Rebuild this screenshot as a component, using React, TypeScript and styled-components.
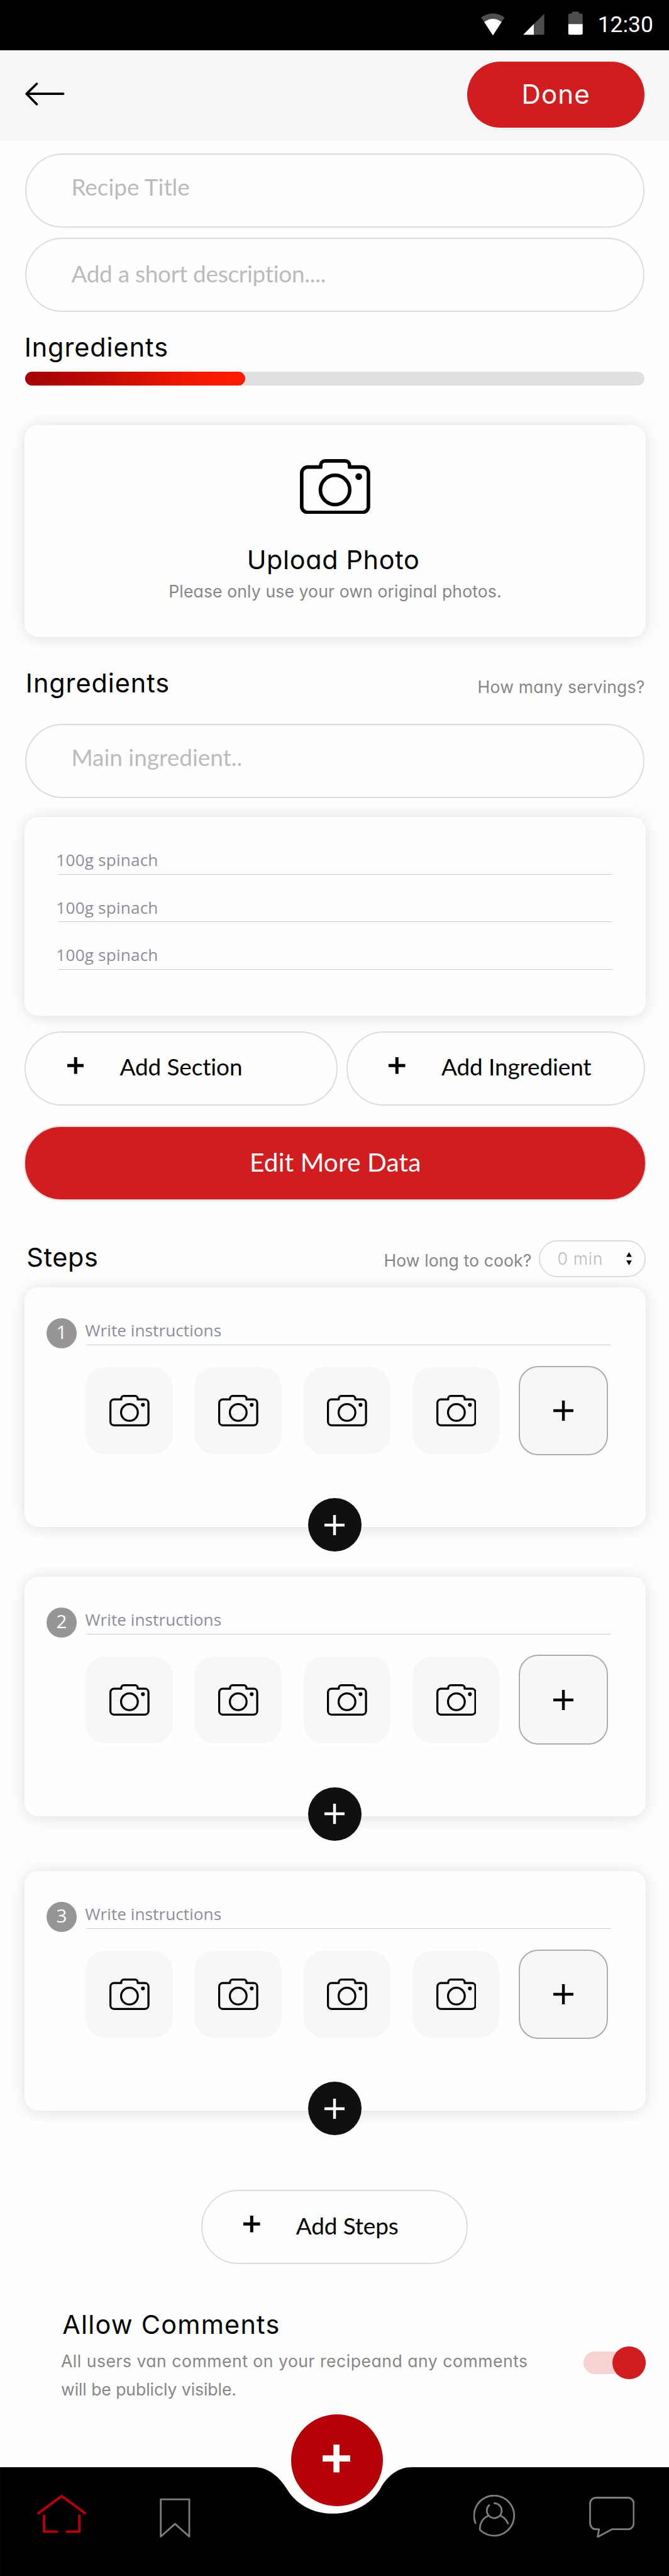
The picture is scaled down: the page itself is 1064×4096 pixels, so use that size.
import React from 'react';
import styled, { createGlobalStyle, css } from 'styled-components';

const SCALE = 0.7387;
/** Converts a design unit (1440-wide artboard) to CSS pixels. */
const u = (n: number) => `${+(n * SCALE).toFixed(3)}px`;

const color = {
  red: '#d11c20',
  deepRed: '#b60008',
  line: '#dddddd',
  hint: '#868686',
  placeholder: '#bbbbbb',
  entry: '#8b8e9a',
  rule: '#c9c9c9',
  tile: '#f7f7f7',
};

const geometric = css`
  font-family: Inter, 'Open Sans', sans-serif;
  font-feature-settings: 'cv11', 'calt' 0;
`;
const humanist = css`
  font-family: Lato, 'Open Sans', sans-serif;
  font-variant-ligatures: none;
`;

const GlobalStyle = createGlobalStyle`
  *, *::before, *::after { box-sizing: border-box; }
  body { margin: 0; background: #fefefe; }
  svg { display: block; flex: none; }
  button { margin: 0; padding: 0; border: 0; background: none; font: inherit; color: inherit; }
  h2, p { margin: 0; font-weight: 400; }
`;

const Page = styled.div`
  width: 1064px;
  height: 4096px;
  overflow: hidden;
  display: flex;
  flex-direction: column;
  background: #fefefe;
  color: #000;
`;

/* ---------- status bar and header ---------- */

const StatusBar = styled.div`
  flex: none;
  display: flex;
  justify-content: flex-end;
  height: ${u(108)};
  padding-right: ${u(34)};
  background: #000;
`;

const Clock = styled.span`
  margin-left: ${u(32.5)};
  padding-top: ${u(33.5)};
  font-family: Roboto, sans-serif;
  font-size: ${u(48)};
  line-height: ${u(40)};
  color: #fff;
`;

const Header = styled.header`
  flex: none;
  display: flex;
  justify-content: space-between;
  align-items: flex-start;
  height: ${u(194)};
  margin-top: ${u(1)};
  padding: ${u(24)} ${u(52.5)} 0 ${u(54.5)};
  background: #f8f8f8;
`;

const BackButton = styled.button`
  padding-top: ${u(44.5)};
`;

const DoneButton = styled.button`
  ${geometric}
  width: ${u(382)};
  height: ${u(142)};
  border-radius: ${u(71)};
  background: ${color.red};
  color: #fff;
  font-size: ${u(57)};
  line-height: ${u(142)};
  letter-spacing: ${u(1.4)};
  text-align: center;
`;

/* ---------- shared parts ---------- */

const Content = styled.main`
  flex: none;
  display: flex;
  flex-direction: column;
  padding: 0 ${u(51)} 0 ${u(53.3)};
`;

const Title = styled.h2<{ $spacing: number }>`
  ${geometric}
  font-size: ${u(56)};
  line-height: ${u(60)};
  letter-spacing: ${(p) => u(p.$spacing)};
  white-space: nowrap;
`;

const Hint = styled.p<{ $spacing: number }>`
  ${geometric}
  font-size: ${u(36)};
  line-height: ${u(40)};
  letter-spacing: ${(p) => u(p.$spacing)};
  color: ${color.hint};
  white-space: nowrap;
`;

const Field = styled.div<{ $top: number; $lift: number; $tracking?: number }>`
  ${humanist}
  display: flex;
  align-items: center;
  width: ${u(1333.5)};
  height: ${u(160)};
  margin: ${(p) => u(p.$top)} 0 0 ${u(1)};
  padding: 0 ${u(100)} ${(p) => u(p.$lift)} ${u(96.5)};
  border: ${u(3)} solid ${color.line};
  border-radius: ${u(80)};
  font-size: ${u(50)};
  letter-spacing: ${(p) => u(p.$tracking ?? 0)};
  color: ${color.placeholder};
`;

const Card = styled.section<{ $top: number; $height: number }>`
  position: relative;
  display: flex;
  flex-direction: column;
  width: ${u(1336.5)};
  height: ${(p) => u(p.$height)};
  margin-top: ${(p) => u(p.$top)};
  border-radius: ${u(30)};
  background: #fefefe;
  box-shadow: 0 ${u(2)} ${u(34)} rgba(0, 0, 0, 0.13);
`;

/* ---------- progress ---------- */

const ProgressTitle = styled(Title)`
  margin: ${u(45.5)} 0 0 ${u(-1)};
`;

const Track = styled.div`
  width: ${u(1333.5)};
  height: ${u(30)};
  margin: ${u(22.5)} 0 0 ${u(1)};
  border-radius: ${u(15)};
  background: #e0e0e0;
`;

const Fill = styled.div`
  width: ${u(474)};
  height: 100%;
  border-radius: inherit;
  background: linear-gradient(90deg, #a10305 0%, #bd0a04 32%, #f01802 74%, #ff1c00 100%);
`;

/* ---------- upload card ---------- */

const UploadCard = styled(Card)`
  align-items: center;
  padding-top: ${u(72.4)};
`;

const UploadTitle = styled(Title)`
  margin: ${u(69)} ${u(8)} 0 0;
`;

const UploadHint = styled(Hint)`
  margin-top: ${u(17.5)};
`;

/* ---------- ingredients ---------- */

const HeadingRow = styled.div<{ $top: number; $height: number }>`
  display: flex;
  align-items: center;
  height: ${(p) => u(p.$height)};
  margin-top: ${(p) => u(p.$top)};
  padding-left: ${u(2)};
`;

const ServingsHint = styled(Hint)`
  margin-left: auto;
  padding: ${u(19)} ${u(1)} 0 0;
`;

const IngredientCard = styled(Card)`
  padding: ${u(22)} ${u(72.5)} 0 ${u(72.7)};
`;

const Entry = styled.div`
  font-family: 'Open Sans', 'Noto Sans', sans-serif;
  font-size: ${u(35.5)};
  line-height: ${u(40)};
  letter-spacing: ${u(0.2)};
  color: ${color.entry};
`;

const IngredientRow = styled(Entry)`
  display: flex;
  align-items: flex-end;
  height: ${u(102)};
  padding-bottom: ${u(9.5)};
  border-bottom: ${u(2.7)} solid ${color.rule};
  text-indent: ${u(-5)};
`;

const ButtonPair = styled.div`
  display: grid;
  grid-template-columns: ${u(673.2)} ${u(642.7)};
  column-gap: ${u(19.2)};
  margin-top: ${u(34)};
`;

const PillButton = styled.button`
  ${humanist}
  display: flex;
  align-items: center;
  gap: ${u(77.5)};
  height: ${u(160)};
  padding: 0 0 ${u(7)} ${u(88.5)};
  border: ${u(3)} solid ${color.line};
  border-radius: ${u(80)};
  font-size: ${u(50)};
  letter-spacing: ${u(-0.15)};
  white-space: nowrap;
  svg { margin-bottom: ${u(5)}; }
`;

const AddStepsButton = styled(PillButton)`
  width: ${u(574.8)};
  margin: ${u(170)} 0 0 ${u(379.3)};
`;

const EditButton = styled.button`
  ${humanist}
  width: ${u(1340)};
  height: ${u(160)};
  margin: ${u(44)} 0 0 ${u(-1.3)};
  padding-bottom: ${u(5)};
  border: ${u(3)} solid ${color.line};
  border-radius: ${u(80)};
  background: ${color.red};
  color: #fff;
  font-size: ${u(55)};
  letter-spacing: ${u(0.15)};
`;

/* ---------- steps ---------- */

const StepsTitle = styled(Title)`
  padding: 0 0 ${u(8)} ${u(2)};
`;

const CookHint = styled(Hint)`
  margin: 0 ${u(16)} 0 auto;
  padding-top: ${u(8)};
`;

const TimeSelect = styled.div`
  ${geometric}
  display: flex;
  align-items: center;
  justify-content: space-between;
  width: ${u(230.5)};
  height: ${u(80)};
  margin-right: ${u(-1.5)};
  padding: 0 ${u(28)} ${u(1)} ${u(37)};
  border: ${u(3)} solid ${color.line};
  border-radius: ${u(40)};
  font-size: ${u(36)};
  font-weight: 300;
  letter-spacing: ${u(1)};
  color: ${color.placeholder};
  white-space: nowrap;
`;

const StepCard = styled(Card)`
  padding: ${u(67)} ${u(75.5)} 0 ${u(46.7)};
`;

const StepLine = styled.div`
  display: flex;
  align-items: flex-start;
  gap: ${u(22.5)};
  height: ${u(65)};
`;

const Badge = styled.span`
  flex: none;
  width: ${u(65)};
  height: ${u(65)};
  border-radius: 50%;
  background: #969696;
  color: #fff;
  font-family: 'Open Sans', sans-serif;
  font-size: ${u(40)};
  line-height: ${u(59)};
  text-align: center;
`;

const Instruction = styled(Entry)`
  flex: 1;
  height: ${u(57.5)};
  padding-top: ${u(6)};
  border-bottom: ${u(2.7)} solid ${color.rule};
  letter-spacing: ${u(0.02)};
  text-indent: ${u(-4.3)};
`;

const Tiles = styled.div`
  display: flex;
  align-items: center;
  gap: ${u(47.3)};
  margin: ${u(37)} 0 0 ${u(84.5)};
`;

const Tile = styled.div`
  flex: none;
  display: grid;
  place-items: center;
  width: ${u(187.2)};
  height: ${u(187)};
  padding-left: ${u(1)};
  border-radius: ${u(42)};
  background: ${color.tile};
`;

const AddTile = styled.button`
  flex: none;
  display: grid;
  place-items: center;
  width: ${u(193)};
  height: ${u(193)};
  margin-left: ${u(-6)};
  border: ${u(3)} solid #acacac;
  border-radius: ${u(42)};
  background: ${color.tile};
`;

const RoundAdd = styled.button`
  position: absolute;
  left: ${u(609.7)};
  top: ${u(454)};
  display: grid;
  place-items: center;
  width: ${u(115)};
  height: ${u(115)};
  border-radius: 50%;
  background: #101010;
`;

/* ---------- comments ---------- */

const CommentsTitle = styled(Title)`
  margin: ${u(99.5)} 0 0 ${u(81)};
`;

const CommentsRow = styled.div`
  display: flex;
  justify-content: space-between;
  align-items: flex-start;
  margin: ${u(19)} ${u(-0.5)} 0 ${u(78)};
`;

const CommentsText = styled(Hint)`
  line-height: ${u(60.3)};
`;

const Toggle = styled.div`
  display: flex;
  align-items: center;
  justify-content: flex-end;
  width: ${u(134)};
  height: ${u(49)};
  margin-top: ${u(9.5)};
  border-radius: ${u(24.5)};
  background: #f6d2d2;
`;

const Knob = styled.span`
  width: ${u(71)};
  height: ${u(71)};
  border-radius: 50%;
  background: ${color.red};
`;

/* ---------- bottom navigation ---------- */

const Nav = styled.nav`
  position: relative;
  flex: none;
  display: flex;
  align-items: flex-start;
  height: ${u(240)};
  margin-top: ${u(137.7)};
  padding: ${u(59)} 0 0 ${u(80)};
`;

const NavShape = styled.svg`
  position: absolute;
  left: 0;
  top: 0;
`;

const NavItem = styled.button<{ $gap?: number; $drop?: number }>`
  position: relative;
  margin: ${(p) => u(p.$drop ?? 0)} 0 0 ${(p) => u(p.$gap ?? 0)};
`;

const Fab = styled.button`
  position: absolute;
  left: ${u(626.4)};
  top: ${u(-114)};
  display: grid;
  place-items: center;
  width: ${u(197.5)};
  height: ${u(197.5)};
  padding: 0 ${u(2)} ${u(6)} 0;
  border-radius: 50%;
  background: ${color.deepRed};
`;

/* ---------- drawings ---------- */

const size = (w: number, h: number) => ({
  width: w * SCALE,
  height: h * SCALE,
  viewBox: `0 0 ${w} ${h}`,
  fill: 'none',
});

const Plus = ({ w, h = w, t, c = '#000' }: { w: number; h?: number; t: number; c?: string }) => (
  <svg {...size(w, h)} stroke={c} strokeWidth={t}>
    <path d={`M0 ${h / 2}H${w}M${w / 2} 0V${h}`} />
  </svg>
);

const Camera = ({ w }: { w: number }) => (
  <svg
    width={w * SCALE}
    height={w * SCALE * (118.7 / 151.4)}
    viewBox="0 0 151.4 118.7"
    fill="none"
    stroke="#000"
    strokeWidth="7.7"
    strokeLinejoin="round"
  >
    <path d="M44.8 17.2V13.3A9.5 9.5 0 0 1 54.3 3.85H97.3A9.5 9.5 0 0 1 106.8 13.3V17.2H134.5A13 13 0 0 1 147.5 30.2V101.8A13 13 0 0 1 134.5 114.8H16.85A13 13 0 0 1 3.85 101.8V30.2A13 13 0 0 1 16.85 17.2Z" />
    <circle cx="75.7" cy="66.3" r="31.6" />
    <circle cx="126.7" cy="37.7" r="7.2" fill="#000" stroke="none" />
  </svg>
);

const BackArrow = () => (
  <svg {...size(86, 50)} stroke="#000" strokeWidth="5" strokeLinecap="round" strokeLinejoin="round">
    <path d="M25 3L3 24.5L25 47M3 24.5H82" />
  </svg>
);

const StatusIcons = () => (
  <svg {...size(223, 80)}>
    <path d="M4.3 37.7Q29.7 19.7 55 37.7L29.7 76Z" fill="#4d4d4d" />
    <path d="M11 47.3Q29.7 34.2 48.3 47.3L29.7 76Z" fill="#fff" />
    <path d="M140.3 29.3V74.7H95Z" fill="#4d4d4d" />
    <path d="M117.7 51.9V74.7H95Z" fill="#fff" />
    <path d="M200 25H215V29H219.5A3.5 3.5 0 0 1 223 32.5V51.7H192V32.5A3.5 3.5 0 0 1 195.5 29H200Z" fill="#4d4d4d" />
    <path d="M192 51.7H223V71.2A3.5 3.5 0 0 1 219.5 74.7H195.5A3.5 3.5 0 0 1 192 71.2Z" fill="#fff" />
  </svg>
);

const Stepper = () => (
  <svg {...size(12, 28)} fill="#000">
    <path d="M6 0L12 10H0ZM6 28L12 18H0Z" />
  </svg>
);

const HomeIcon = () => (
  <svg {...size(106, 86)} stroke={color.deepRed} strokeWidth="5.4" strokeLinecap="round" strokeLinejoin="round">
    <path d="M3 40.7L53 4L103 40.7M15 46V80.6H42.4M91 46V80.6H64" />
  </svg>
);

const navStroke = { stroke: '#7d7d7d', strokeWidth: 3.8, strokeLinejoin: 'round' as const, strokeLinecap: 'round' as const };

const BookmarkIcon = () => (
  <svg {...size(66, 86)} {...navStroke}>
    <path d="M2.3 3H63.7V83L33 55.7L2.3 83Z" />
  </svg>
);

const UserIcon = () => (
  <svg {...size(91, 91)} {...navStroke}>
    <path d="M4.3 60.6A43.2 43.2 0 1 1 14 75.3C13.3 61 20 49.5 32 45.3" />
    <path d="M59 45.3C66 48.5 71.5 54 74.3 61.5" />
    <path d="M45 18A16 16 0 1 1 34 22.2" />
  </svg>
);

const ChatIcon = () => (
  <svg {...size(98, 88)} {...navStroke}>
    <path d="M15 2H83A13 13 0 0 1 96 15V57A13 13 0 0 1 83 70H49L18.3 86.5L21.3 70H15A13 13 0 0 1 2 57V15A13 13 0 0 1 15 2Z" />
  </svg>
);

/* ---------- screen ---------- */

const Step = ({ index, top }: { index: number; top: number }) => (
  <StepCard $top={top} $height={516.5}>
    <StepLine>
      <Badge>{index}</Badge>
      <Instruction>Write instructions</Instruction>
    </StepLine>
    <Tiles>
      {[0, 1, 2, 3].map((n) => (
        <Tile key={n}>
          <Camera w={86.3} />
        </Tile>
      ))}
      <AddTile aria-label="Add photo">
        <Plus w={43.5} t={6} />
      </AddTile>
    </Tiles>
    <RoundAdd aria-label="Insert step">
      <Plus w={43.5} t={6} c="#fff" />
    </RoundAdd>
  </StepCard>
);

export default function App() {
  return (
    <Page>
      <GlobalStyle />
      <StatusBar>
        <StatusIcons />
        <Clock>12:30</Clock>
      </StatusBar>
      <Header>
        <BackButton aria-label="Back">
          <BackArrow />
        </BackButton>
        <DoneButton>Done</DoneButton>
      </Header>

      <Content>
        <Field $top={27} $lift={16}>Recipe Title</Field>
        <Field $top={22} $lift={5} $tracking={-0.36}>Add a short description....</Field>

        <ProgressTitle $spacing={1.3}>Ingredients</ProgressTitle>
        <Track>
          <Fill />
        </Track>

        <UploadCard $top={85.5} $height={456.5}>
          <Camera w={151.4} />
          <UploadTitle $spacing={0.9}>Upload Photo</UploadTitle>
          <UploadHint $spacing={0.15}>Please only use your own original photos.</UploadHint>
        </UploadCard>

        <HeadingRow $top={68} $height={60}>
          <Title $spacing={1.3}>Ingredients</Title>
          <ServingsHint $spacing={0.25}>How many servings?</ServingsHint>
        </HeadingRow>
        <Field $top={58} $lift={15}>Main ingredient..</Field>

        <IngredientCard $top={41} $height={427}>
          <IngredientRow>100g spinach</IngredientRow>
          <IngredientRow>100g spinach</IngredientRow>
          <IngredientRow>100g spinach</IngredientRow>
        </IngredientCard>

        <ButtonPair>
          <PillButton>
            <Plus w={36} t={6.8} />
            Add Section
          </PillButton>
          <PillButton>
            <Plus w={36} t={6.8} />
            Add Ingredient
          </PillButton>
        </ButtonPair>
        <EditButton>Edit More Data</EditButton>

        <HeadingRow $top={86} $height={80}>
          <StepsTitle $spacing={0.9}>Steps</StepsTitle>
          <CookHint $spacing={0.12}>How long to cook?</CookHint>
          <TimeSelect>
            0 min
            <Stepper />
          </TimeSelect>
        </HeadingRow>

        <Step index={1} top={21} />
        <Step index={2} top={106} />
        <Step index={3} top={117.5} />

        <AddStepsButton>
          <Plus w={36} t={6.8} />
          Add Steps
        </AddStepsButton>

        <CommentsTitle $spacing={1.67}>Allow Comments</CommentsTitle>
        <CommentsRow>
          <div>
            <CommentsText $spacing={0.68}>All users van comment on your recipeand any comments</CommentsText>
            <CommentsText $spacing={-0.1}>will be publicly visible.</CommentsText>
          </div>
          <Toggle>
            <Knob />
          </Toggle>
        </CommentsRow>
      </Content>

      <Nav>
        <NavShape width={1064} height={234 * SCALE + 2} viewBox={`0 0 ${1064 / SCALE} ${234 + 2 / SCALE}`}>
          <path d="M0 0H549C576 0 601 20 617 46C638 82 676 100 716.5 100C757 100 798 82 819 46C834 18 858 0 886 0H1445V240H0Z" fill="#000" />
        </NavShape>
        <NavItem aria-label="Home">
          <HomeIcon />
        </NavItem>
        <NavItem aria-label="Saved" $gap={158} $drop={7}>
          <BookmarkIcon />
        </NavItem>
        <NavItem aria-label="Profile" $gap={609.5} $drop={1}>
          <UserIcon />
        </NavItem>
        <NavItem aria-label="Messages" $gap={157.5} $drop={5}>
          <ChatIcon />
        </NavItem>
        <Fab aria-label="Create">
          <Plus w={60} t={13} c="#fff" />
        </Fab>
      </Nav>
    </Page>
  );
}
